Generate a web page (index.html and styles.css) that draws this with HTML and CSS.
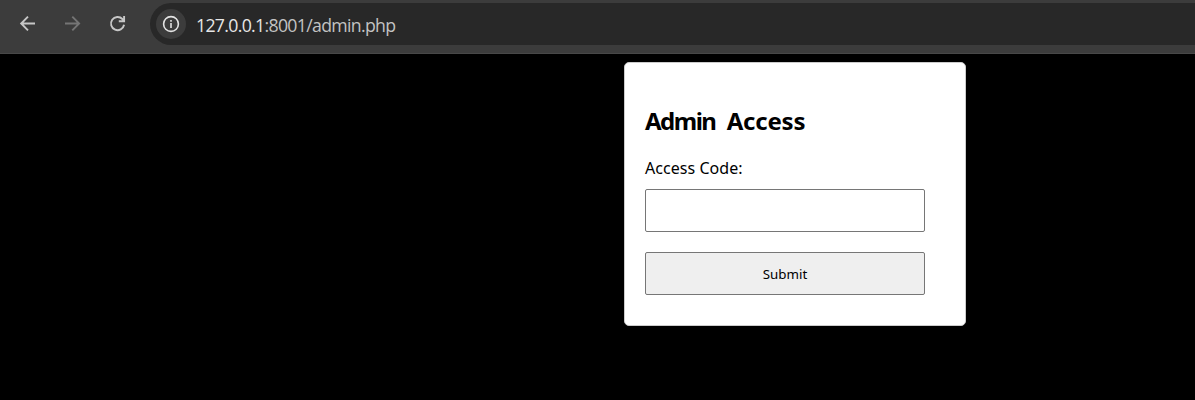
FILE: index.html
```html
<!DOCTYPE html>
<html lang="en">
<head>
<meta charset="utf-8">
<title>Admin Access</title>
<link rel="stylesheet" href="styles.css">
</head>
<body>
<header class="toolbar">
  <nav class="nav">
    <svg class="icon" viewBox="0 0 20 20"><path d="M17 9.5H3.2M10 2.7L3.2 9.5L10 16.3"/></svg>
    <svg class="icon icon-off" viewBox="0 0 20 20"><path d="M2 9.5H15.8M9.3 2.7L16.1 9.5L9.3 16.3"/></svg>
    <svg class="icon" viewBox="0 0 20 20"><path d="M16.1 10.8A6.6 6.6 0 1 1 14.4 5L16 6.6M16.1 2V7.2H10.8"/></svg>
  </nav>
  <div class="address">
    <span class="info"><svg class="info-icon" viewBox="0 0 18 18"><circle cx="9" cy="9" r="7.4"/><path d="M9 8V13M9 5V6.8"/></svg></span>
    <span class="url"><span class="host">127.0.0.1</span><span class="path">:8001/admin.php</span></span>
  </div>
</header>
<main class="page">
  <form class="card">
    <h2 class="title"><span class="title-first">Admin</span> <span class="title-second">Access</span></h2>
    <label class="label" for="code">Access Code:</label>
    <input class="field" id="code" type="text">
    <button class="submit" type="button">Submit</button>
  </form>
</main>
</body>
</html>
```
FILE: styles.css
```css
* { box-sizing: border-box; }
body {
  margin: 0;
  height: 400px;
  overflow: hidden;
  background: #000;
}
.toolbar {
  display: flex;
  height: 54px;
  padding: 3px 0 0 18px;
  background: #3c3c3c;
  border-bottom: 1px solid #484848;
}
.nav {
  display: flex;
  gap: 25px;
  width: 132px;
  padding-top: 11px;
}
.icon {
  flex: none;
  width: 20px;
  height: 20px;
  fill: none;
  stroke: #c7c7c7;
  stroke-width: 1.9;
}
.icon-off { stroke: #757575; }
.address {
  display: flex;
  align-items: center;
  flex: 1;
  height: 42px;
  padding-left: 6px;
  background: #282828;
  border-radius: 21px 0 0 21px;
}
.info {
  display: flex;
  align-items: center;
  justify-content: center;
  width: 30px;
  height: 30px;
  border-radius: 50%;
  background: #3c3c3c;
}
.info-icon {
  width: 18px;
  height: 18px;
  fill: none;
  stroke: #e3e3e3;
  stroke-width: 1.6;
}
.url {
  margin: 1px 0 0 10px;
  font: 17.7px/24px "Segoe UI", "Open Sans", sans-serif;
  letter-spacing: -0.68px;
  white-space: nowrap;
}
.host { color: #e6e6e6; }
.path { color: #c3c3c3; }
.page { padding: 8px 0 0 624px; }
.card {
  display: flex;
  flex-direction: column;
  width: 342px;
  height: 264px;
  padding: 40px 40px 0 20px;
  background: #fff;
  border: 1px solid #ccc;
  border-radius: 5px;
  font-family: "Comic Sans MS", "Noto Sans", sans-serif;
  color: #000;
}
.title {
  height: 53px;
  margin: 0;
  font-size: 24px;
  line-height: 36px;
  word-spacing: 5px;
  white-space: nowrap;
}
.title-first { letter-spacing: -1.5px; }
.title-second { letter-spacing: -0.2px; }
.label {
  height: 33px;
  font-size: 16px;
  line-height: 24px;
  letter-spacing: 0.05px;
}
.field {
  width: 280px;
  height: 43px;
  border: 1px solid #767676;
  border-radius: 2px;
  background: #fff;
}
.submit {
  width: 280px;
  height: 43px;
  margin-top: 20px;
  padding: 1px 0 0;
  border: 1px solid #767676;
  border-radius: 2px;
  background: #efefef;
  color: #000;
  font: 13.333px/19px "Comic Sans MS", "Noto Sans", sans-serif;
}
```
